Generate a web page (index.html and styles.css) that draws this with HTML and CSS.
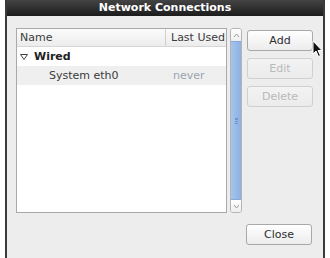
FILE: index.html
```html
<!DOCTYPE html>
<html>
<head>
<meta charset="utf-8">
<link rel="stylesheet" href="styles.css">
</head>
<body>
<div class="window">
  <div class="titlebar">Network Connections</div>
  <div class="content">
    <div class="main">
      <div class="list">
        <div class="header">
          <div class="col-name">Name</div>
          <div class="col-used">Last Used</div>
        </div>
        <div class="row group">
          <span class="expander"><svg width="8" height="6" viewBox="0 0 8 6"><path d="M0.5 0.5 L7.5 0.5 L4 5.5 Z" fill="none" stroke="#444" stroke-width="1"/></svg></span>
          <span class="group-name">Wired</span>
        </div>
        <div class="row item">
          <div class="col-name item-name">System eth0</div>
          <div class="col-used never">never</div>
        </div>
      </div>
      <div class="scrollbar">
        <div class="arrow up"><svg width="7" height="5" viewBox="0 0 7 5"><path d="M1 4 L3.5 1 L6 4" fill="none" stroke="#9a9a9a" stroke-width="1"/></svg></div>
        <div class="thumb"><span class="grip"></span></div>
        <div class="arrow down"><svg width="7" height="5" viewBox="0 0 7 5"><path d="M1 1 L3.5 4 L6 1" fill="none" stroke="#9a9a9a" stroke-width="1"/></svg></div>
      </div>
      <div class="buttons">
        <button class="btn">Add</button>
        <button class="btn disabled">Edit</button>
        <button class="btn disabled">Delete</button>
      </div>
    </div>
    <div class="footer">
      <button class="btn">Close</button>
    </div>
  </div>
  <svg class="cursor" width="12" height="18" viewBox="0 0 12 18"><path d="M1 1 L1 14 L4 11 L6.5 16.5 L8.5 15.5 L6 10.5 L10 10.5 Z" fill="#111" stroke="#fff" stroke-width="1"/></svg>
</div>
</body>
</html>
```
FILE: styles.css
```css
* { box-sizing: border-box; }
body {
  margin: 0;
  background: #ffffff;
  font-family: "DejaVu Sans", sans-serif;
  font-size: 11px;
  color: #2e2e2e;
}
.window {
  position: relative;
  margin-left: 5px;
  width: 320px;
  height: 258px;
  background: #ededed;
  border-left: 2px solid #3a3a3a;
  border-right: 2px solid #3a3a3a;
  display: flex;
  flex-direction: column;
}
.titlebar {
  height: 16px;
  background: linear-gradient(#444444, #1c1c1c);
  color: #ffffff;
  font-weight: bold;
  font-size: 11px;
  text-align: center;
  line-height: 16px;
}
.content {
  flex: 1;
  padding: 12px 10px 0 9px;
  display: flex;
  flex-direction: column;
}
.main {
  display: flex;
  align-items: flex-start;
}
.list {
  width: 211px;
  height: 185px;
  background: #ffffff;
  border: 1px solid #a9a9a9;
}
.header {
  display: flex;
  height: 18px;
  line-height: 17px;
  border-bottom: 1px solid #d6d6d6;
  background: linear-gradient(#fbfbfb, #ececec);
  color: #3c3c3c;
}
.col-name {
  width: 149px;
  padding-left: 3px;
}
.header .col-name { border-right: 1px solid #d0d0d0; }
.col-used {
  flex: 1;
  padding-left: 5px;
}
.row {
  height: 19px;
  line-height: 19px;
  display: flex;
  align-items: center;
}
.group { padding-left: 3px; }
.expander {
  display: inline-flex;
  width: 14px;
  align-items: center;
}
.group-name {
  font-weight: bold;
  color: #222;
  font-size: 11px;
}
.item { background: #efefef; }
.item-name { padding-left: 32px; color: #3a3a3a; }
.never { color: #9aa3b0; padding-left: 7px; }
.scrollbar {
  margin-left: 3px;
  width: 12px;
  height: 185px;
  border: 1px solid #b4b4b4;
  border-radius: 3px;
  background: #f2f2f2;
  display: flex;
  flex-direction: column;
  overflow: hidden;
}
.arrow {
  height: 12px;
  display: flex;
  align-items: center;
  justify-content: center;
  background: linear-gradient(#ffffff, #eeeeee);
}
.thumb {
  flex: 1;
  background: linear-gradient(90deg, #a7c4ea, #8db1e2);
  border-top: 1px solid #86a8d8;
  border-bottom: 1px solid #86a8d8;
  display: flex;
  align-items: center;
  justify-content: center;
}
.grip {
  width: 3px;
  height: 6px;
  border-top: 1px solid #6f94c8;
  border-bottom: 1px solid #6f94c8;
  background: repeating-linear-gradient(#6f94c8 0 1px, transparent 1px 2px);
}
.buttons {
  margin-left: 5px;
  padding-top: 2px;
  display: flex;
  flex-direction: column;
  gap: 7px;
}
.btn {
  width: 66px;
  height: 21px;
  font-family: "DejaVu Sans", sans-serif;
  font-size: 11px;
  color: #2e2e2e;
  background: linear-gradient(#ffffff, #ececec);
  border: 1px solid #a9a9a9;
  border-radius: 3px;
  padding: 0;
}
.btn.disabled {
  color: #b9b9b9;
  border-color: #d0d0d0;
  background: linear-gradient(#f3f3f3, #ebebeb);
}
.footer {
  display: flex;
  justify-content: flex-end;
  padding-top: 11px;
  padding-right: 1px;
}
.cursor {
  position: absolute;
  left: 305px;
  top: 40px;
}
```
